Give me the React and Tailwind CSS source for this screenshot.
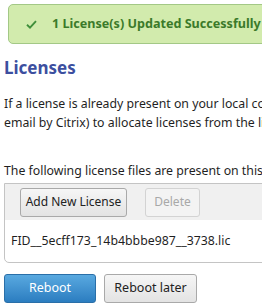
export default function App() {
  return (
    <div
      className="w-[262px] h-[308px] overflow-hidden bg-white text-[#1f1f1f]"
      style={{ fontFamily: '"Noto Sans", "Open Sans", sans-serif' }}
    >
      {/* Success banner */}
      <div className="pl-2 pt-1">
        <div className="w-[300px] h-[40px] flex items-center gap-[15px] pl-[17px] rounded-[5px] border border-[#a3c886] bg-[#d2ebad]">
          <svg width="11" height="9" viewBox="0 0 11 9" className="shrink-0">
            <path d="M1 4.8 L4 7.6 L10 1.2" fill="none" stroke="#3f8f3a" strokeWidth="1.9" />
          </svg>
          <span className="text-[12.6px] font-bold text-[#3b7a2a] whitespace-nowrap">
            1 License(s) Updated Successfully
          </span>
        </div>
      </div>

      <div className="px-1">
        <h1 className="mt-[13px] text-[17px] leading-[22px] font-bold text-[#3c4f9f]">Licenses</h1>

        <div className="mt-[15px] text-[12.3px] leading-[19px] whitespace-nowrap">
          <p>If a license is already present on your local computer (or was sent by</p>
          <p>email by Citrix) to allocate licenses from the licensing portal.</p>
        </div>

        <p className="mt-[29px] text-[12.3px] leading-[19px] whitespace-nowrap">
          The following license files are present on this NetScaler appliance.
        </p>

        {/* License file panel */}
        <div className="mt-[3px] w-[300px] border border-[#c4c4c4] rounded-b-[5px]">
          <div className="h-[36px] bg-[#f0f0f0] flex items-center gap-[18px] pl-[15px]">
            <button className="h-[29px] w-[107px] text-[12px] rounded-[3px] border border-[#a9a9a9] bg-gradient-to-b from-[#f6f6f6] to-[#e3e3e3] text-[#222]">
              Add New License
            </button>
            <button className="h-[29px] w-[55px] text-[12px] rounded-[3px] border border-[#d3d3d3] bg-[#f3f3f3] text-[#a8a8a8]">
              Delete
            </button>
          </div>
          <div className="h-[42px] flex items-center pl-[6px] text-[12.3px] whitespace-nowrap">
            FID__5ecff173_14b4bbbe987__3738.lic
          </div>
        </div>

        <div className="mt-[11px] flex gap-[8px]">
          <button className="h-[29px] w-[92px] text-[12.5px] rounded-[3px] border border-[#2a6fa8] bg-gradient-to-b from-[#59a9e0] to-[#2b7dc0] text-white">
            Reboot
          </button>
          <button className="h-[29px] w-[93px] text-[12.5px] rounded-[3px] border border-[#a9a9a9] bg-gradient-to-b from-[#f6f6f6] to-[#e3e3e3] text-[#222]">
            Reboot later
          </button>
        </div>
      </div>
    </div>
  );
}
